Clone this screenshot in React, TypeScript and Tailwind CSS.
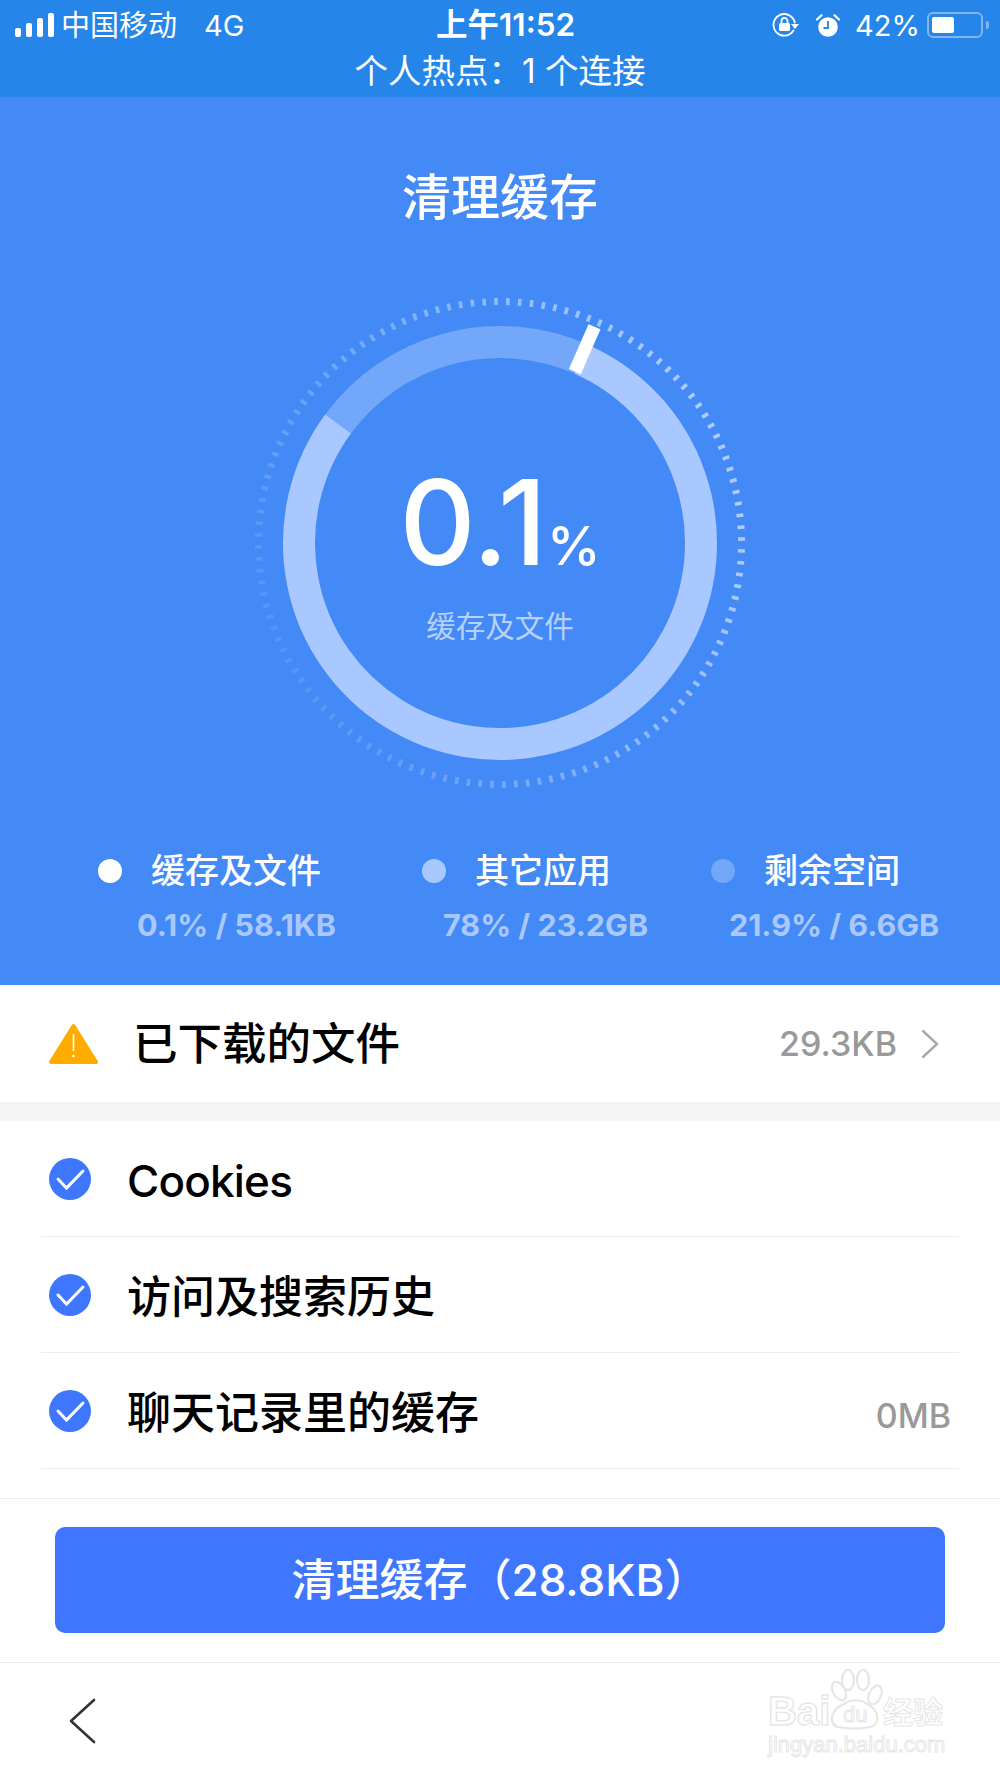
const FONT = "[font-family:Inter,'Noto_Sans_CJK_SC',sans-serif]";

const CENTER = 260;
const TICK_COUNT = 128;

function polar(radius: number, degrees: number) {
  const rad = ((degrees - 90) * Math.PI) / 180;
  return { x: CENTER + radius * Math.cos(rad), y: CENTER + radius * Math.sin(rad) };
}

function arc(radius: number, start: number, end: number) {
  const a = polar(radius, start);
  const b = polar(radius, end);
  const large = end - start > 180 ? 1 : 0;
  return `M ${a.x} ${a.y} A ${radius} ${radius} 0 ${large} 1 ${b.x} ${b.y}`;
}

function Gauge() {
  const ticks = Array.from({ length: TICK_COUNT }, (_, i) => (i * 360) / TICK_COUNT - 0.94);
  const barStart = polar(187, 23.6);
  const barEnd = polar(236, 23.6);

  return (
    <div className="relative h-[520px] w-[520px]">
      <svg className="h-full w-full" viewBox="0 0 520 520">
        {ticks.map((angle) => {
          const from = polar(238, angle);
          const to = polar(245, angle);
          const opacity = 0.1 + 0.47 * (0.5 + 0.5 * Math.cos(((angle - 70) * Math.PI) / 180));
          return (
            <line
              key={angle}
              opacity={opacity}
              stroke="#ffffff"
              strokeWidth={3.6}
              x1={from.x}
              x2={to.x}
              y1={from.y}
              y2={to.y}
            />
          );
        })}
        <path d={arc(201, 23.6, 306.4)} fill="none" stroke="#a8c8ff" strokeWidth={32} />
        <path d={arc(201, 306.4, 383.6)} fill="none" stroke="#72a7fa" strokeWidth={32} />
        <line
          stroke="#ffffff"
          strokeWidth={13}
          x1={barStart.x}
          x2={barEnd.x}
          y1={barStart.y}
          y2={barEnd.y}
        />
      </svg>
      <div className="absolute inset-0 flex flex-col items-center">
        <div className="mt-[164px] flex h-[150px] items-baseline text-white">
          <span className="text-[118px] leading-[150px] font-medium">0.1</span>
          <span className="text-[54px] leading-none font-medium">%</span>
        </div>
        <span className="mt-[9px] text-[29.5px] leading-[40px] text-[#b7d1fb]">缓存及文件</span>
      </div>
    </div>
  );
}

function SignalIcon() {
  return (
    <svg className="h-[24px] w-[39px]" viewBox="0 0 39 24" fill="#ffffff">
      <rect x="0" y="15" width="6" height="9" rx="2" />
      <rect x="11" y="10" width="6" height="14" rx="2" />
      <rect x="22" y="5" width="6" height="19" rx="2" />
      <rect x="33" y="0" width="6" height="24" rx="2" />
    </svg>
  );
}

function RotationLockIcon() {
  return (
    <svg className="h-[24px] w-[27px]" viewBox="0 0 27 24" fill="none">
      <path
        d="M21.5 17.5 A10.8 10.8 0 1 1 22.8 9.5"
        stroke="#ffffff"
        strokeLinecap="round"
        strokeWidth="1.8"
      />
      <path d="M19 11h8l-4 5z" fill="#ffffff" />
      <rect x="7" y="10" width="11" height="8" rx="1.5" fill="#ffffff" />
      <path d="M9.5 10V8a3 3 0 0 1 6 0v2" stroke="#ffffff" strokeWidth="1.8" />
    </svg>
  );
}

function AlarmIcon() {
  return (
    <svg className="h-[23px] w-[24px]" viewBox="0 0 24 23" fill="none">
      <circle cx="12" cy="13" r="9.8" fill="#ffffff" />
      <path d="M12 7v7H7.5" stroke="#2585e9" strokeWidth="1.8" />
      <path d="M1 5.5 5.5 1.2M23 5.5 18.5 1.2" stroke="#ffffff" strokeLinecap="round" strokeWidth="2.2" />
    </svg>
  );
}

function BatteryIcon() {
  return (
    <div className="flex items-center">
      <div className="h-[26px] w-[56px] rounded-[6px] border-2 border-[#81b5f1] p-[3px]">
        <div className="h-full w-[22px] rounded-[2px] bg-white" />
      </div>
      <div className="ml-[3px] h-[8px] w-[3px] rounded-r-sm bg-[#81b5f1]" />
    </div>
  );
}

function StatusBar() {
  return (
    <div className="h-[97px] bg-[#2585e9] text-white">
      <div className="flex h-[50px] items-center pl-[15px] text-[29px] leading-none">
        <SignalIcon />
        <span className="ml-[7px] w-[143px]">中国移动</span>
        <span className="w-[232px] text-[29px]">4G</span>
        <span className="w-[336px] text-[31.5px] font-semibold">上午11:52</span>
        <RotationLockIcon />
        <span className="ml-[17px]">
          <AlarmIcon />
        </span>
        <span className="ml-[15px] w-[72px] text-[29px]">42%</span>
        <BatteryIcon />
      </div>
      <div className="mt-[3px] text-center text-[33.5px] leading-[36px]">个人热点：1 个连接</div>
    </div>
  );
}

function LegendItem({
  dot,
  label,
  value,
  width,
  valueInset,
}: {
  dot: string;
  label: string;
  value: string;
  width: string;
  valueInset: string;
}) {
  return (
    <div className={width}>
      <div className="flex h-[40px] items-center">
        <span className={`h-[24px] w-[24px] rounded-full ${dot}`} />
        <span className="ml-[29px] text-[34px] leading-[40px] font-medium text-white">{label}</span>
      </div>
      <div className={`mt-[17px] text-[30.5px] leading-[34px] font-bold whitespace-nowrap text-[#a9c8fb] ${valueInset}`}>
        {value}
      </div>
    </div>
  );
}

function Hero() {
  return (
    <section className="h-[888px] bg-[#448af7]">
      <h1 className="pt-[71px] text-center text-[49px] leading-[60px] font-medium text-white">清理缓存</h1>
      <div className="mt-[55px] flex justify-center">
        <Gauge />
      </div>
      <div className="mt-[48px] flex pl-[98px]">
        <LegendItem
          dot="bg-white"
          label="缓存及文件"
          value="0.1% / 58.1KB"
          valueInset="ml-[39px]"
          width="w-[324px]"
        />
        <LegendItem
          dot="bg-[#a8c8ff]"
          label="其它应用"
          value="78% / 23.2GB"
          valueInset="ml-[21px]"
          width="w-[289px]"
        />
        <LegendItem
          dot="bg-[#72a7fa]"
          label="剩余空间"
          value="21.9% / 6.6GB"
          valueInset="ml-[18px]"
          width="w-[230px]"
        />
      </div>
    </section>
  );
}

function WarningIcon() {
  return (
    <svg className="h-[42px] w-[49px]" viewBox="0 0 49 42">
      <path d="M24.5 3 47 39H2z" fill="#ffab00" stroke="#ffab00" strokeLinejoin="round" strokeWidth="4" />
      <path d="M24.5 11v17" stroke="#ffffff" strokeWidth="1.6" />
      <circle cx="24.5" cy="33" r="1.3" fill="#ffffff" />
    </svg>
  );
}

function CheckIcon() {
  return (
    <svg className="h-[42px] w-[42px] shrink-0" viewBox="0 0 42 42" fill="none">
      <circle cx="21" cy="21" r="21" fill="#3e77fe" />
      <path d="M9 21 17.5 30 34 13" stroke="#ffffff" strokeLinecap="round" strokeWidth="3" />
    </svg>
  );
}

function CleanRow({ label, size, tight }: { label: string; size?: string; tight?: boolean }) {
  return (
    <div className="mx-[41px] flex h-[116px] items-center border-b border-[#eeeeee] px-[8px]">
      <CheckIcon />
      <span
        className={`mt-[4px] ml-[36px] text-[44px] leading-[50px] font-medium text-black ${
          tight ? "tracking-[-0.8px]" : ""
        }`}
      >
        {label}
      </span>
      {size ? <span className="mt-[10px] ml-auto text-[34px] font-medium text-[#999999]">{size}</span> : null}
    </div>
  );
}

function Watermark() {
  return (
    <svg
      className="absolute top-[4px] right-[45px] h-[108px] w-[195px] [font-family:'Liberation_Sans','Noto_Sans_CJK_SC',sans-serif]"
      viewBox="0 0 195 108"
      fill="#ffffff"
      stroke="#e6e6e6"
    >
      <text x="8" y="58" fontSize="40" fontWeight="700" strokeWidth="1.4">Bai</text>
      <g fill="none" strokeWidth="2.2">
        <ellipse cx="79" cy="24" rx="6" ry="10" transform="rotate(-30 79 24)" />
        <ellipse cx="88" cy="13" rx="6" ry="10" />
        <ellipse cx="103" cy="13" rx="6" ry="10" />
        <ellipse cx="115" cy="28" rx="6" ry="10" transform="rotate(25 115 28)" />
        <path d="M78 60c-12-4-5-19 6-23 7-5 17-5 23 0 11 5 15 20 3 23-10 2-22 2-32 0z" />
      </g>
      <text x="83" y="55" fontSize="22" strokeWidth="1">du</text>
      <text x="123" y="56" fontSize="30" fontWeight="700" strokeWidth="1">经验</text>
      <text x="8" y="85" fontSize="22" strokeWidth="1">jingyan.baidu.com</text>
    </svg>
  );
}

export default function App() {
  return (
    <div className={`h-[1778px] w-[1000px] overflow-hidden bg-white ${FONT}`}>
      <StatusBar />
      <Hero />

      <div className="flex h-[117px] items-center pr-[61px] pl-[49px]">
        <WarningIcon />
        <span className="ml-[35px] text-[44.5px] leading-[50px] font-medium text-black">已下载的文件</span>
        <span className="ml-auto text-[34px] font-medium text-[#999999]">29.3KB</span>
        <svg className="ml-[24px] h-[30px] w-[18px]" viewBox="0 0 18 30" fill="none">
          <path d="M2 2 16 15 2 28" stroke="#a8a8a8" strokeLinecap="round" strokeWidth="2.4" />
        </svg>
      </div>
      <div className="h-[19px] bg-[#f5f5f5]" />

      <CleanRow label="Cookies" tight />
      <CleanRow label="访问及搜索历史" />
      <CleanRow label="聊天记录里的缓存" size="0MB" />

      <div className="mt-[29px] h-[164px] border-t border-[#eeeeee] px-[55px] pt-[28px]">
        <button
          className="flex h-[106px] w-full items-center justify-center rounded-[10px] bg-[#3e77fe] text-[44px] font-medium text-white"
          type="button"
        >
          清理缓存（28.8KB）
        </button>
      </div>

      <div className="relative h-[116px] border-t border-[#eeeeee]">
        <svg className="mt-[35px] ml-[68px] h-[46px] w-[28px]" viewBox="0 0 28 46" fill="none">
          <path d="M26 2 3 23 26 44" stroke="#333333" strokeLinecap="round" strokeLinejoin="round" strokeWidth="2.6" />
        </svg>
        <Watermark />
      </div>
    </div>
  );
}
